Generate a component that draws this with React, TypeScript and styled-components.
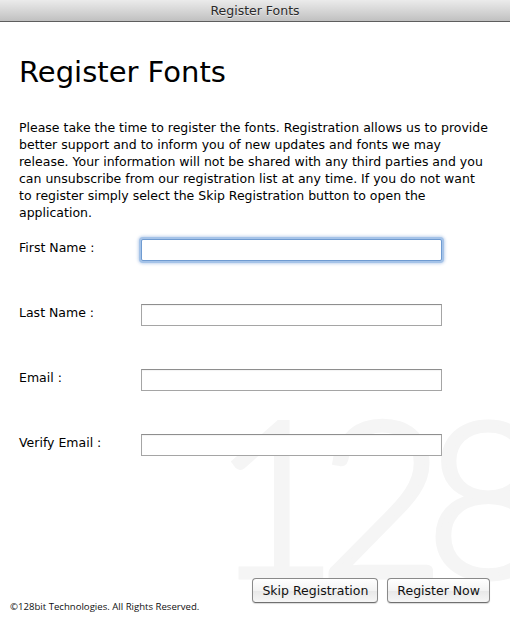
import styled, { createGlobalStyle } from "styled-components";

const Global = createGlobalStyle`
  html, body {
    margin: 0;
    padding: 0;
    background: #fff;
  }
  body {
    font-family: "DejaVu Sans", "Liberation Sans", sans-serif;
    color: #000;
  }
`;

const Window = styled.div`
  position: relative;
  width: 510px;
  height: 622px;
  overflow: hidden;
  background: #fff;
  display: flex;
  flex-direction: column;
`;

const TitleBar = styled.div`
  height: 21px;
  flex: none;
  border-bottom: 1px solid #5e5e5e;
  background: linear-gradient(#ebebeb, #d2d2d2 60%, #c0c0c0);
  display: flex;
  align-items: center;
  justify-content: center;
  font-size: 12.5px;
  color: #2a2a2a;
  text-shadow: 0 1px 0 rgba(255, 255, 255, 0.6);
`;

// faint "128" brand mark behind the form
const Watermark = styled.div`
  position: absolute;
  z-index: 0;
  left: 212px;
  top: 384px;
  font-family: "Lato", sans-serif;
  font-weight: 300;
  font-size: 218px;
  line-height: 1;
  letter-spacing: -20px;
  color: #f5f5f5;
  -webkit-text-stroke: 5px #f5f5f5;
  user-select: none;
`;

const Body = styled.div`
  position: relative;
  z-index: 1;
  flex: 1;
  display: flex;
  flex-direction: column;
  padding: 0 19px;
`;

const Heading = styled.h1`
  margin: 32px 0 0;
  font-weight: normal;
  font-size: 29px;
  line-height: 36px;
`;

const Intro = styled.p`
  margin: 29px 0 0;
  font-size: 12.5px;
  line-height: 17px;
`;

const Form = styled.div`
  display: flex;
  flex-direction: column;
  gap: 43px;
  margin-top: 18px;
`;

const Row = styled.label`
  display: flex;
  align-items: flex-start;
  height: 22px;
`;

const Label = styled.span`
  width: 122px;
  font-size: 12.5px;
  line-height: 17px;
`;

const Input = styled.input<{ $focused?: boolean }>`
  box-sizing: border-box;
  width: 301px;
  height: 22px;
  margin: 0;
  padding: 0 4px;
  font: inherit;
  font-size: 12.5px;
  background: #fff;
  border: 1px solid ${(p) => (p.$focused ? "#6f9bd1" : "#a5a5a5")};
  border-top-color: ${(p) => (p.$focused ? "#6f9bd1" : "#8e8e8e")};
  box-shadow: ${(p) =>
    p.$focused
      ? "0 0 0 2px #a5c3e8, 0 0 3px 3px rgba(120,160,215,0.45)"
      : "inset 0 1px 1px rgba(0,0,0,0.05)"};
  border-radius: ${(p) => (p.$focused ? "2px" : "0")};
  outline: none;
`;

const Footer = styled.div`
  position: relative;
  z-index: 1;
  display: flex;
  align-items: flex-end;
  justify-content: space-between;
  padding: 0 20px 9px 10px;
`;

const Copyright = styled.span`
  font-family: "Open Sans", "Liberation Sans", sans-serif;
  font-size: 9.6px;
  color: #111;
`;

const Buttons = styled.div`
  display: flex;
  gap: 9px;
  margin-bottom: 10px;
`;

const Button = styled.button`
  box-sizing: border-box;
  height: 25px;
  padding: 0 9px;
  font-family: inherit;
  font-size: 12.5px;
  color: #111;
  background: linear-gradient(#ffffff, #f3f3f3 50%, #e8e8e8 51%, #f6f6f6);
  border: 1px solid #8a8a8a;
  border-bottom-color: #707070;
  border-radius: 4px;
  box-shadow: 0 1px 1px rgba(0, 0, 0, 0.15);
`;

export default function App() {
  return (
    <>
      <Global />
      <Window>
        <TitleBar>Register Fonts</TitleBar>
        <Watermark>128</Watermark>
        <Body>
          <Heading>Register Fonts</Heading>
          <Intro>
            Please take the time to register the fonts. Registration allows us to provide
            better support and to inform you of new updates and fonts we may
            release. Your information will not be shared with any third parties and you
            can unsubscribe from our registration list at any time. If you do not want
            to register simply select the Skip Registration button to open the
            application.
          </Intro>
          <Form>
            <Row>
              <Label>First Name :</Label>
              <Input $focused autoFocus />
            </Row>
            <Row>
              <Label>Last Name :</Label>
              <Input />
            </Row>
            <Row>
              <Label>Email :</Label>
              <Input />
            </Row>
            <Row>
              <Label>Verify Email :</Label>
              <Input />
            </Row>
          </Form>
        </Body>
        <Footer>
          <Copyright>©128bit Technologies. All Rights Reserved.</Copyright>
          <Buttons>
            <Button>Skip Registration</Button>
            <Button>Register Now</Button>
          </Buttons>
        </Footer>
      </Window>
    </>
  );
}
